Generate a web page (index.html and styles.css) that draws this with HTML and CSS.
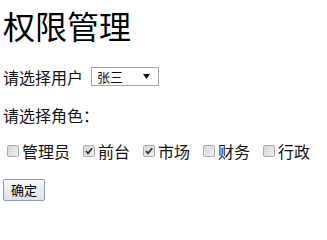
FILE: index.html
```html
<!DOCTYPE html>
<html lang="zh">
<head>
<meta charset="utf-8">
<title>权限管理</title>
<link rel="stylesheet" href="styles.css">
</head>
<body>
<div class="page">
  <h1 class="title">权限管理</h1>
  <div class="row user-row">
    <span class="label">请选择用户</span>
    <span class="select">
      <span class="select-text">张三</span>
      <svg class="arrow" width="7" height="5" viewBox="0 0 7 5"><path d="M0 0H7L3.5 5Z" fill="#111"/></svg>
    </span>
  </div>
  <div class="row role-label">请选择角色：</div>
  <div class="row roles">
    <label class="role"><span class="cb"><svg width="12" height="12" viewBox="0 0 12 12"><rect x="0.5" y="0.5" width="11" height="11" rx="1.5" fill="url(#g)" stroke="#a9a9a9"/></svg></span>管理员</label>
    <label class="role"><span class="cb"><svg width="12" height="12" viewBox="0 0 12 12"><rect x="0.5" y="0.5" width="11" height="11" rx="1.5" fill="url(#g)" stroke="#a9a9a9"/><path d="M3 6L5 8.3L9.2 3.2" fill="none" stroke="#333" stroke-width="1.8"/></svg></span>前台</label>
    <label class="role"><span class="cb"><svg width="12" height="12" viewBox="0 0 12 12"><rect x="0.5" y="0.5" width="11" height="11" rx="1.5" fill="url(#g)" stroke="#a9a9a9"/><path d="M3 6L5 8.3L9.2 3.2" fill="none" stroke="#333" stroke-width="1.8"/></svg></span>市场</label>
    <label class="role"><span class="cb"><svg width="12" height="12" viewBox="0 0 12 12"><rect x="0.5" y="0.5" width="11" height="11" rx="1.5" fill="url(#g)" stroke="#a9a9a9"/></svg></span>财务</label>
    <label class="role"><span class="cb"><svg width="12" height="12" viewBox="0 0 12 12"><rect x="0.5" y="0.5" width="11" height="11" rx="1.5" fill="url(#g)" stroke="#a9a9a9"/></svg></span>行政</label>
  </div>
  <div class="actions"><span class="btn">确定</span></div>
  <svg class="defs" width="0" height="0"><defs><linearGradient id="g" x1="0" y1="0" x2="1" y2="1"><stop offset="0" stop-color="#d6d6d6"/><stop offset="1" stop-color="#f2f2f2"/></linearGradient></defs></svg>
</div>
</body>
</html>
```
FILE: styles.css
```css
html, body {
  margin: 0;
  padding: 0;
  background: #fff;
}
body {
  font-family: "Noto Sans CJK SC", "Liberation Sans", sans-serif;
  color: #111;
}
.page {
  padding: 7px 3px 0 3px;
}
.title {
  margin: 0;
  font-size: 32px;
  line-height: 36px;
  font-weight: normal;
  color: #000;
}
.row {
  font-size: 16px;
  line-height: 20px;
  display: flex;
  align-items: center;
}
.user-row {
  margin-top: 24px;
  height: 19px;
}
.label {
  margin-right: 8px;
}
.select {
  box-sizing: border-box;
  width: 68px;
  height: 19px;
  border: 1px solid #a5a5a5;
  display: flex;
  align-items: center;
  justify-content: space-between;
  padding: 0 8px 0 5px;
  font-size: 13px;
  line-height: 17px;
}
.arrow {
  display: block;
}
.role-label {
  margin-top: 19px;
  height: 20px;
}
.roles {
  margin-top: 16px;
  height: 20px;
  padding-left: 4px;
}
.role {
  display: flex;
  align-items: center;
  margin-right: 13px;
}
.cb {
  display: flex;
  width: 12px;
  height: 12px;
  margin-right: 3px;
}
.actions {
  margin-top: 18px;
  display: flex;
}
.btn {
  box-sizing: border-box;
  width: 42px;
  height: 22px;
  border: 1px solid #8a9bb5;
  border-radius: 2px;
  background: linear-gradient(#f7f7f7, #e2e2e2);
  font-size: 13px;
  line-height: 20px;
  text-align: center;
  color: #000;
}
.defs {
  position: absolute;
}
```
